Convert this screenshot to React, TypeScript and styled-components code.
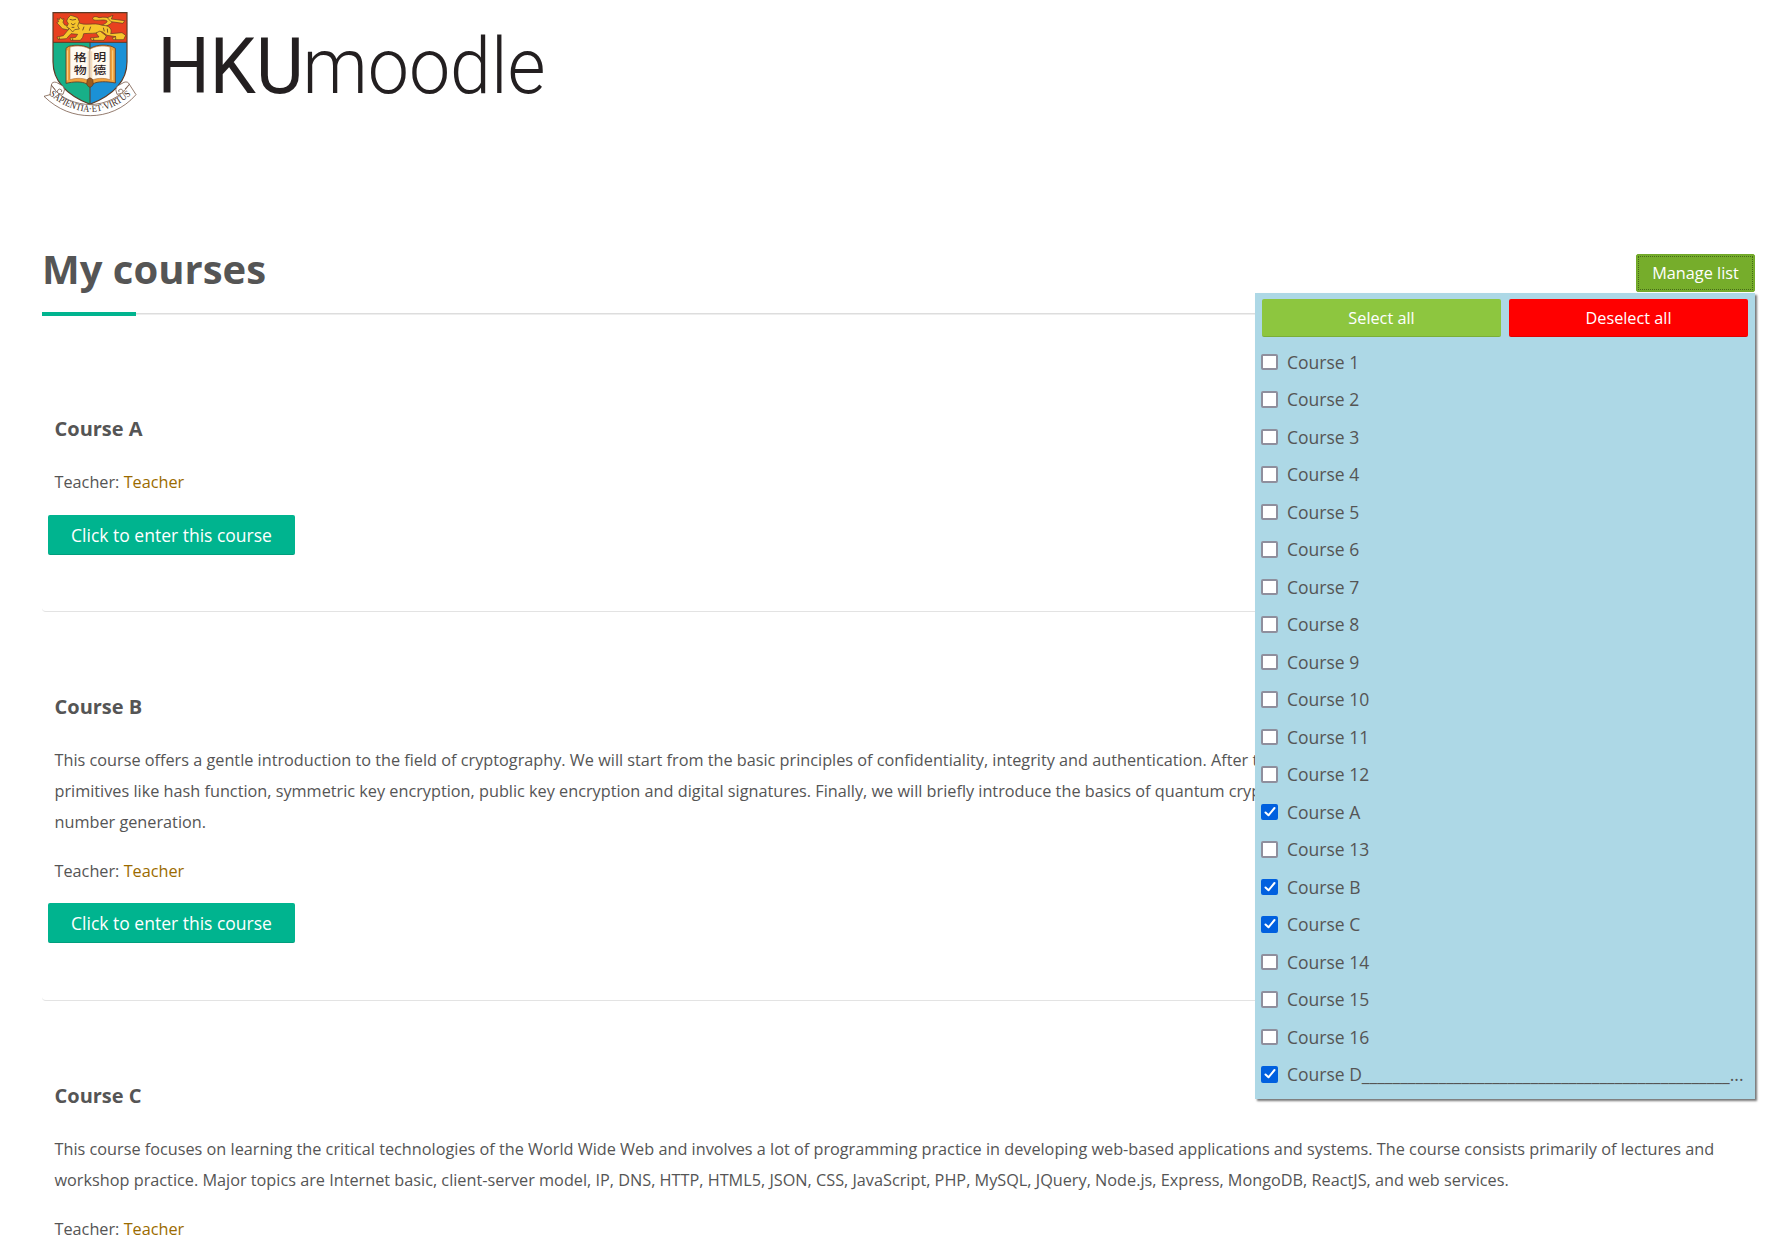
import React, { useState } from "react";
import styled, { createGlobalStyle } from "styled-components";

const Global = createGlobalStyle`
  * { box-sizing: border-box; }
  html, body { margin: 0; padding: 0; background: #fff; }
  body {
    font-family: "Open Sans", "Noto Sans", sans-serif;
    font-size: 16.25px;
    line-height: 30.875px;
    color: #555;
  }
`;

const Page = styled.div`
  height: 1246px;
  overflow: hidden;
  padding: 0 29px 0 42px;
`;

const Header = styled.header`
  display: flex;
  height: 252px;
  padding-top: 8px;
`;

const Crest = styled.svg`
  display: block;
  flex: none;
  width: 96px;
  height: 112px;
`;

const Wordmark = styled.svg`
  display: block;
  flex: none;
  width: 420px;
  height: 112px;
  overflow: visible;
`;

const TitleBar = styled.div`
  position: relative;
  display: flex;
  justify-content: space-between;
  height: 64px;
  padding-top: 2px;
  background:
    linear-gradient(#00b48f, #00b48f) left bottom / 94px 4px no-repeat,
    linear-gradient(#dddddd 50%, #eeeeee 50%) left bottom 1px / 100% 2px no-repeat;
`;

const Title = styled.h1`
  margin: 0;
  font-size: 40px;
  line-height: 30px;
  font-weight: 700;
`;

const Button = styled.button<{ $bg: string }>`
  height: 38px;
  padding: 1px 0 0;
  border: 0;
  border-bottom: 1px solid rgba(0, 0, 0, 0.12);
  border-radius: 2px;
  background: ${(p) => p.$bg};
  color: #fff;
  font: inherit;
  line-height: 36px;
`;

const ManageButton = styled(Button)`
  width: 119px;
  padding: 0;
  border: 1px solid #72a92a;
  outline: 1px dotted #46691a;
  outline-offset: -3px;
`;

const Panel = styled.div`
  position: absolute;
  z-index: 2;
  top: 41px;
  right: 0;
  width: 500px;
  height: 806px;
  padding: 6px 7px 0;
  background: #add8e6;
  box-shadow: 2px 2px 2px #777;
`;

const PanelActions = styled.div`
  display: grid;
  grid-template-columns: 1fr 1fr;
  gap: 8px;
  padding-bottom: 6px;
`;

const Option = styled.label`
  display: flex;
  align-items: center;
  height: 37.5px;
  font-size: 17.5px;
`;

const HiddenInput = styled.input`
  position: absolute;
  opacity: 0;
  pointer-events: none;
`;

const Box = styled.span<{ $on: boolean }>`
  display: grid;
  place-items: center;
  flex: none;
  width: 17px;
  height: 16.5px;
  margin: 0 9px 0 -1px;
  border: 2px solid ${(p) => (p.$on ? "#0060df" : "#8f8f9d")};
  border-radius: 2px;
  background: ${(p) => (p.$on ? "#0060df" : "#fff")};
`;

const OptionText = styled.span`
  padding-top: 0.6px;
  white-space: nowrap;
`;

const Courses = styled.main`
  display: flex;
  flex-direction: column;
  padding-top: 18.1px;
`;

const Card = styled.article<{ $height: number }>`
  height: ${(p) => p.$height}px;
  padding: 78.9px 12.5px 0;
  border-bottom: 1px solid #e3e3e3;
  border-radius: 4px;
`;

const CardTitle = styled.h3`
  margin: 0 0 23px;
  font-size: 20px;
  line-height: 31px;
  font-weight: 700;
`;

const Text = styled.p`
  margin: 0 0 18px;
  white-space: pre;
`;

const TeacherLine = styled(Text)`
  margin-bottom: 16.8px;
`;

const Teacher = styled.a`
  color: #9b6b00;
`;

const EnterButton = styled(Button)`
  display: block;
  width: 247px;
  height: 40px;
  margin-left: -6.5px;
  font-size: 17.5px;
  line-height: 38px;
`;

function CrestLogo() {
  const outline = "#5d3a26";
  return (
    <Crest viewBox="36 24 288 336" aria-label="University crest">
      <defs>
        <clipPath id="shield">
          <path d="M69 38H291V185C291 248 242 288 180 313C118 288 69 248 69 185Z" />
        </clipPath>
        <path id="motto" d="M58 284Q117 334 181 336Q250 334 307 280" />
      </defs>
      <g clipPath="url(#shield)">
        <rect x="68" y="37" width="224" height="92" fill="#e8401f" />
        <rect x="68" y="127" width="112" height="190" fill="#18b088" />
        <rect x="180" y="127" width="112" height="190" fill="#1b91d6" />
        <path d="M68 127H292M180 127V315" stroke={outline} strokeWidth="3" />
      </g>
      <path d="M69 38H291V185C291 248 242 288 180 313C118 288 69 248 69 185Z" fill="none" stroke={outline} strokeWidth="3.500" />

      <g fill="#f7c52b" stroke={outline} strokeWidth="2" strokeLinejoin="round">
        <path d="M215 76C232 68 238 62 222 60C205 60 193 63 188 57C187 49 199 48 207 53C221 50 237 51 246 58C253 65 240 74 226 79Z" />
        <path d="M232 53L249 46L244 57L284 62L279 70L243 65Z" />
        <path d="M115 90L97 86L86 74L80 68L86 65L82 56L88 59L91 52L96 58L102 56L99 67L104 75L118 78Z" />
        <path d="M141 65C163 81 190 65 217 76C240 76 247 89 242 101L276 98L287 106L281 119L250 119L247 113L258 110L231 106L216 95C199 102 177 99 161 101L158 112L151 121L122 121L120 114L137 112L143 103L123 101L109 116L84 118L81 111L100 107L111 94L119 85Z" />
        <path d="M210 93L229 108L222 121L185 121L181 114L207 111L198 99Z" />
        <path d="M114 54L122 46L132 49L143 53L148 65L143 78L148 87L134 89L128 96L119 86L110 81L115 71L110 63Z" />
      </g>
      <path d="M119 58L128 60L138 58M123 70L129 75L136 70M125 82L133 82M162 80L158 91M182 80L178 92M220 83L223 94M232 86L233 98M88 112V118M128 115V121M191 115V121M257 112V119" fill="none" stroke={outline} strokeWidth="2.500" />

      <path d="M108 145L116 139C140 132 169 137 180 146C193 136 224 131 247 140L256 145V249C231 244 201 243 189 252H171C154 243 130 245 108 250Z" fill="#f0a13b" stroke={outline} strokeWidth="2.500" />
      <path d="M120 141C143 135 168 139 180 148V244C164 233 140 233 120 239Z" fill="#fffaf0" stroke="#9c633b" strokeWidth="1.500" />
      <path d="M240 141C218 135 193 139 180 148V244C196 233 220 233 240 239Z" fill="#fffaf0" stroke="#9c633b" strokeWidth="1.500" />
      <path d="M112 151V241M248 151V241" stroke="#fbd58a" strokeWidth="3" />
      <path d="M175 154V235M185 154V235" stroke="#f6dfbc" strokeWidth="4" />
      <g fill="#30231f" fontFamily='"Noto Sans CJK TC", sans-serif' fontWeight="500" fontSize="32">
        <text x="131" y="184" textLength="39" lengthAdjust="spacingAndGlyphs">格</text>
        <text x="131" y="221" textLength="39" lengthAdjust="spacingAndGlyphs">物</text>
        <text x="190" y="184" textLength="39" lengthAdjust="spacingAndGlyphs">明</text>
        <text x="190" y="221" textLength="39" lengthAdjust="spacingAndGlyphs">德</text>
      </g>
      <path d="M172 238Q180 229 188 238L190 252Q187 261 180 262Q173 261 170 252Z" fill="#9b5b21" stroke={outline} strokeWidth="2" />

      <g fill="#fff" stroke={outline} strokeWidth="2" strokeLinejoin="round">
        <path d="M76 269L64 255Q66 244 79 247L99 258Q108 268 99 283L84 280Q77 272 89 267Q99 269 94 276" />
        <path d="M285 267L298 253Q294 243 282 247L262 258Q253 268 261 283L276 280Q284 272 273 267Q262 269 267 276" />
        <path d="M64 256C93 299 139 312 181 314C225 312 272 294 298 253L318 284C280 328 229 347 181 347C132 347 84 330 42 289L60 284Z" />
      </g>
      <text fill="#3b2a24" fontFamily='"Liberation Serif", serif' fontSize="29">
        <textPath href="#motto" textLength="272" lengthAdjust="spacingAndGlyphs">SAPIENTIA·ET·VIRTUS</textPath>
      </text>
    </Crest>
  );
}

function Logo() {
  return (
    <Wordmark viewBox="138 8 420 112" aria-label="HKU moodle">
      <g fill="#231f20" fontFamily="Roboto, sans-serif" fontSize="77">
        <text x="157.500" y="92.800" fontWeight="400" textLength="146" lengthAdjust="spacingAndGlyphs">HKU</text>
        <text x="302.500" y="92.800" fontWeight="300" textLength="243" lengthAdjust="spacingAndGlyphs">moodle</text>
      </g>
    </Wordmark>
  );
}

const options = [
  "Course 1", "Course 2", "Course 3", "Course 4", "Course 5", "Course 6", "Course 7",
  "Course 8", "Course 9", "Course 10", "Course 11", "Course 12", "Course A", "Course 13",
  "Course B", "Course C", "Course 14", "Course 15", "Course 16",
  "Course D" + "_".repeat(48) + "...",
];

const courses = [
  { name: "Course A", height: 277.9, text: "" },
  {
    name: "Course B",
    height: 389,
    text:
      "This course offers a gentle introduction to the field of cryptography. We will start from the basic principles of confidentiality, integrity and authentication. After t\nprimitives like hash function, symmetric key encryption, public key encryption and digital signatures. Finally, we will briefly introduce the basics of quantum cryp\nnumber generation.",
  },
  {
    name: "Course C",
    height: 358,
    text:
      "This course focuses on learning the critical technologies of the World Wide Web and involves a lot of programming practice in developing web-based applications and systems. The course consists primarily of lectures and\nworkshop practice. Major topics are Internet basic, client-server model, IP, DNS, HTTP, HTML5, JSON, CSS, JavaScript, PHP, MySQL, JQuery, Node.js, Express, MongoDB, ReactJS, and web services.",
  },
];

export default function App() {
  const [picked, setPicked] = useState<number[]>([12, 14, 15, 19]);
  const toggle = (i: number) =>
    setPicked((p) => (p.includes(i) ? p.filter((n) => n !== i) : [...p, i]));

  return (
    <Page>
      <Global />
      <Header>
        <CrestLogo />
        <Logo />
      </Header>
      <TitleBar>
        <Title>My courses</Title>
        <ManageButton $bg="#76ad2b">Manage list</ManageButton>
        <Panel>
          <PanelActions>
            <Button $bg="#8dc63f" onClick={() => setPicked(options.map((_, i) => i))}>Select all</Button>
            <Button $bg="#ff0000" onClick={() => setPicked([])}>Deselect all</Button>
          </PanelActions>
          {options.map((label, i) => (
            <Option key={label}>
              <HiddenInput type="checkbox" checked={picked.includes(i)} onChange={() => toggle(i)} />
              <Box $on={picked.includes(i)}>
                {picked.includes(i) && (
                  <svg width="12" height="12" viewBox="0 0 12 12" fill="none">
                    <path d="M1.500 6.500L4.500 9.300L10.500 2" stroke="#fff" strokeWidth="2" strokeLinecap="round" strokeLinejoin="round" />
                  </svg>
                )}
              </Box>
              <OptionText>{label}</OptionText>
            </Option>
          ))}
        </Panel>
      </TitleBar>
      <Courses>
        {courses.map((c) => (
          <Card key={c.name} $height={c.height}>
            <CardTitle>{c.name}</CardTitle>
            {c.text && <Text>{c.text}</Text>}
            <TeacherLine>
              Teacher: <Teacher>Teacher</Teacher>
            </TeacherLine>
            {c.name !== "Course C" && <EnterButton $bg="#00b48f">Click to enter this course</EnterButton>}
          </Card>
        ))}
      </Courses>
    </Page>
  );
}
